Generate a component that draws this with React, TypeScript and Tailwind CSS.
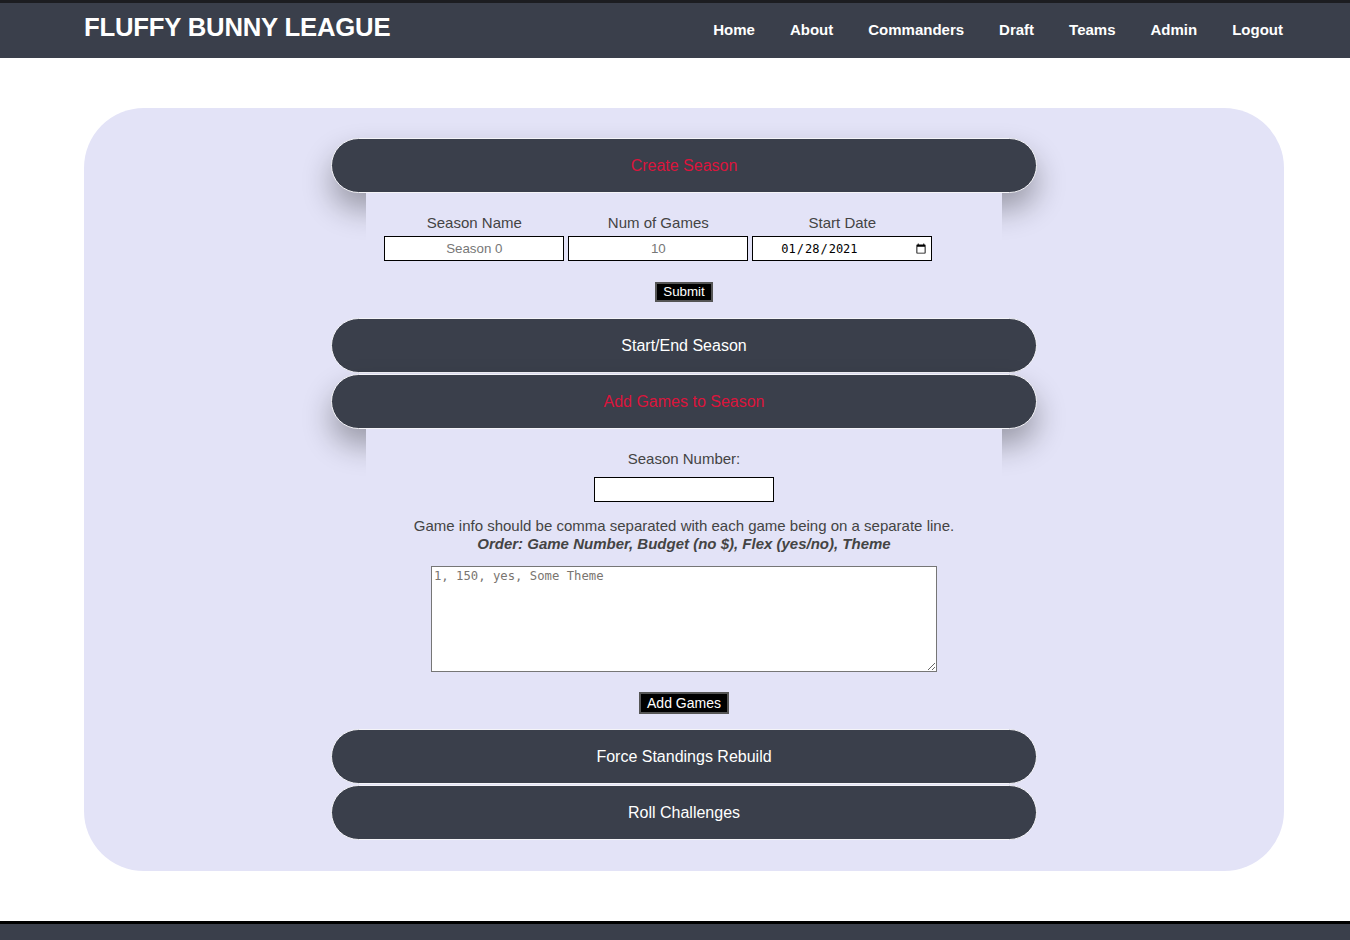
import { useState } from 'react'

const navItems = ['Home', 'About', 'Commanders', 'Draft', 'Teams', 'Admin', 'Logout']

function Pill({ label, active, onClick }: { label: string; active?: boolean; onClick?: () => void }) {
  return (
    <button
      onClick={onClick}
      className={`relative block w-full h-[55px] rounded-full bg-[#3a3f4b] border border-[#f4f4f8] text-[16px] ${active ? 'text-[#dc143c] shadow-[0_16px_30px_rgba(0,0,0,0.32)]' : 'text-white'}`}
    >
      {label}
    </button>
  )
}

export default function App() {
  const [open, setOpen] = useState({ create: true, toggle: false, games: true })
  const [seasonName, setSeasonName] = useState('')
  const [numGames, setNumGames] = useState('')
  const [seasonNumber, setSeasonNumber] = useState('')
  const [gameInfo, setGameInfo] = useState('')

  return (
    <div className="min-h-[940px] bg-white flex flex-col font-['Liberation_Sans',Arial,sans-serif]">
      <header className="h-[58px] border-t-[3px] border-[#1c1d21] bg-[#3a3f4b] flex items-center justify-between pl-[84px] pr-[67px]">
        <h1 className="text-white font-bold text-[25.7px] leading-none mb-[5px] tracking-[-0.2px]">FLUFFY BUNNY LEAGUE</h1>
        <nav className="flex items-center gap-[35px]">
          {navItems.map(item => (
            <a key={item} href="#" className="text-white font-bold text-[15px]">{item}</a>
          ))}
        </nav>
      </header>

      <main className="pt-[50px] pb-[50px]">
        <div className="ml-[84px] w-[1200px] rounded-[60px] bg-[#e3e3f7] pt-[30px] pb-[31px] flex flex-col items-center">
          <div className="w-[706px] flex flex-col gap-[1px]">
            <section className="flex flex-col items-center">
              <Pill label="Create Season" active={open.create} onClick={() => setOpen(o => ({ ...o, create: !o.create }))} />
              {open.create && (
                <div className="relative z-10 w-[90%] bg-[#e3e3f7] pt-[21px] pb-[15px] flex flex-col items-center text-[#444]">
                  <div className="flex self-start pl-[18px] gap-[4px]">
                    {[
                      { label: 'Season Name', node: <input value={seasonName} onChange={e => setSeasonName(e.target.value)} placeholder="Season 0" className="w-[180px] h-[25px] border border-black bg-white text-center text-[13.33px] placeholder:text-[#777] outline-none" /> },
                      { label: 'Num of Games', node: <input value={numGames} onChange={e => setNumGames(e.target.value)} placeholder="10" className="w-[180px] h-[25px] border border-black bg-white text-center text-[13.33px] placeholder:text-[#777] outline-none" /> },
                      { label: 'Start Date', node: <input type="date" defaultValue="2021-01-28" className="w-[180px] h-[25px] border border-black bg-white text-[12px] text-black font-['DejaVu_Sans_Mono',monospace] pl-[27px] pr-[2px] outline-none" /> },
                    ].map(col => (
                      <div key={col.label} className="flex flex-col items-center w-[180px]">
                        <label className="text-[15px] leading-[17px] mb-[5px]">{col.label}</label>
                        {col.node}
                      </div>
                    ))}
                  </div>
                  <button className="mt-[21px] h-[20px] px-[6px] bg-black text-white text-[13.33px] leading-none border-2 border-[#555]">Submit</button>
                </div>
              )}
            </section>

            <section>
              <Pill label="Start/End Season" active={open.toggle} onClick={() => setOpen(o => ({ ...o, toggle: !o.toggle }))} />
            </section>

            <section className="flex flex-col items-center">
              <Pill label="Add Games to Season" active={open.games} onClick={() => setOpen(o => ({ ...o, games: !o.games }))} />
              {open.games && (
                <div className="relative z-10 w-[90%] bg-[#e3e3f7] pt-[21px] pb-[14px] flex flex-col items-center text-[#444]">
                  <label className="text-[15px] leading-[17px]">Season Number:</label>
                  <input value={seasonNumber} onChange={e => setSeasonNumber(e.target.value)} className="mt-[10px] w-[180px] h-[25px] border border-black bg-white text-center text-[13.33px] outline-none" />
                  <p className="mt-[15px] text-[15px] leading-[18px] text-center whitespace-nowrap">
                    Game info should be comma separated with each game being on a separate line.
                    <br />
                    <b><i>Order: Game Number, Budget (no $), Flex (yes/no), Theme</i></b>
                  </p>
                  <textarea
                    value={gameInfo}
                    onChange={e => setGameInfo(e.target.value)}
                    placeholder="1, 150, yes, Some Theme"
                    className="mt-[13px] w-[506px] h-[106px] border border-[#767676] bg-white p-[2px] text-[12.25px] leading-[15px] font-['DejaVu_Sans_Mono',monospace] placeholder:text-[#7a7570] outline-none"
                  />
                  <button className="mt-[20px] h-[22px] px-[6px] bg-black text-white text-[14px] leading-none border-2 border-[#555]">Add Games</button>
                </div>
              )}
            </section>

            <section>
              <Pill label="Force Standings Rebuild" />
            </section>
            <section>
              <Pill label="Roll Challenges" />
            </section>
          </div>
        </div>
      </main>

      <footer className="h-[20px] border-t-[3px] border-black bg-[#3a3f4b]" />
    </div>
  )
}
